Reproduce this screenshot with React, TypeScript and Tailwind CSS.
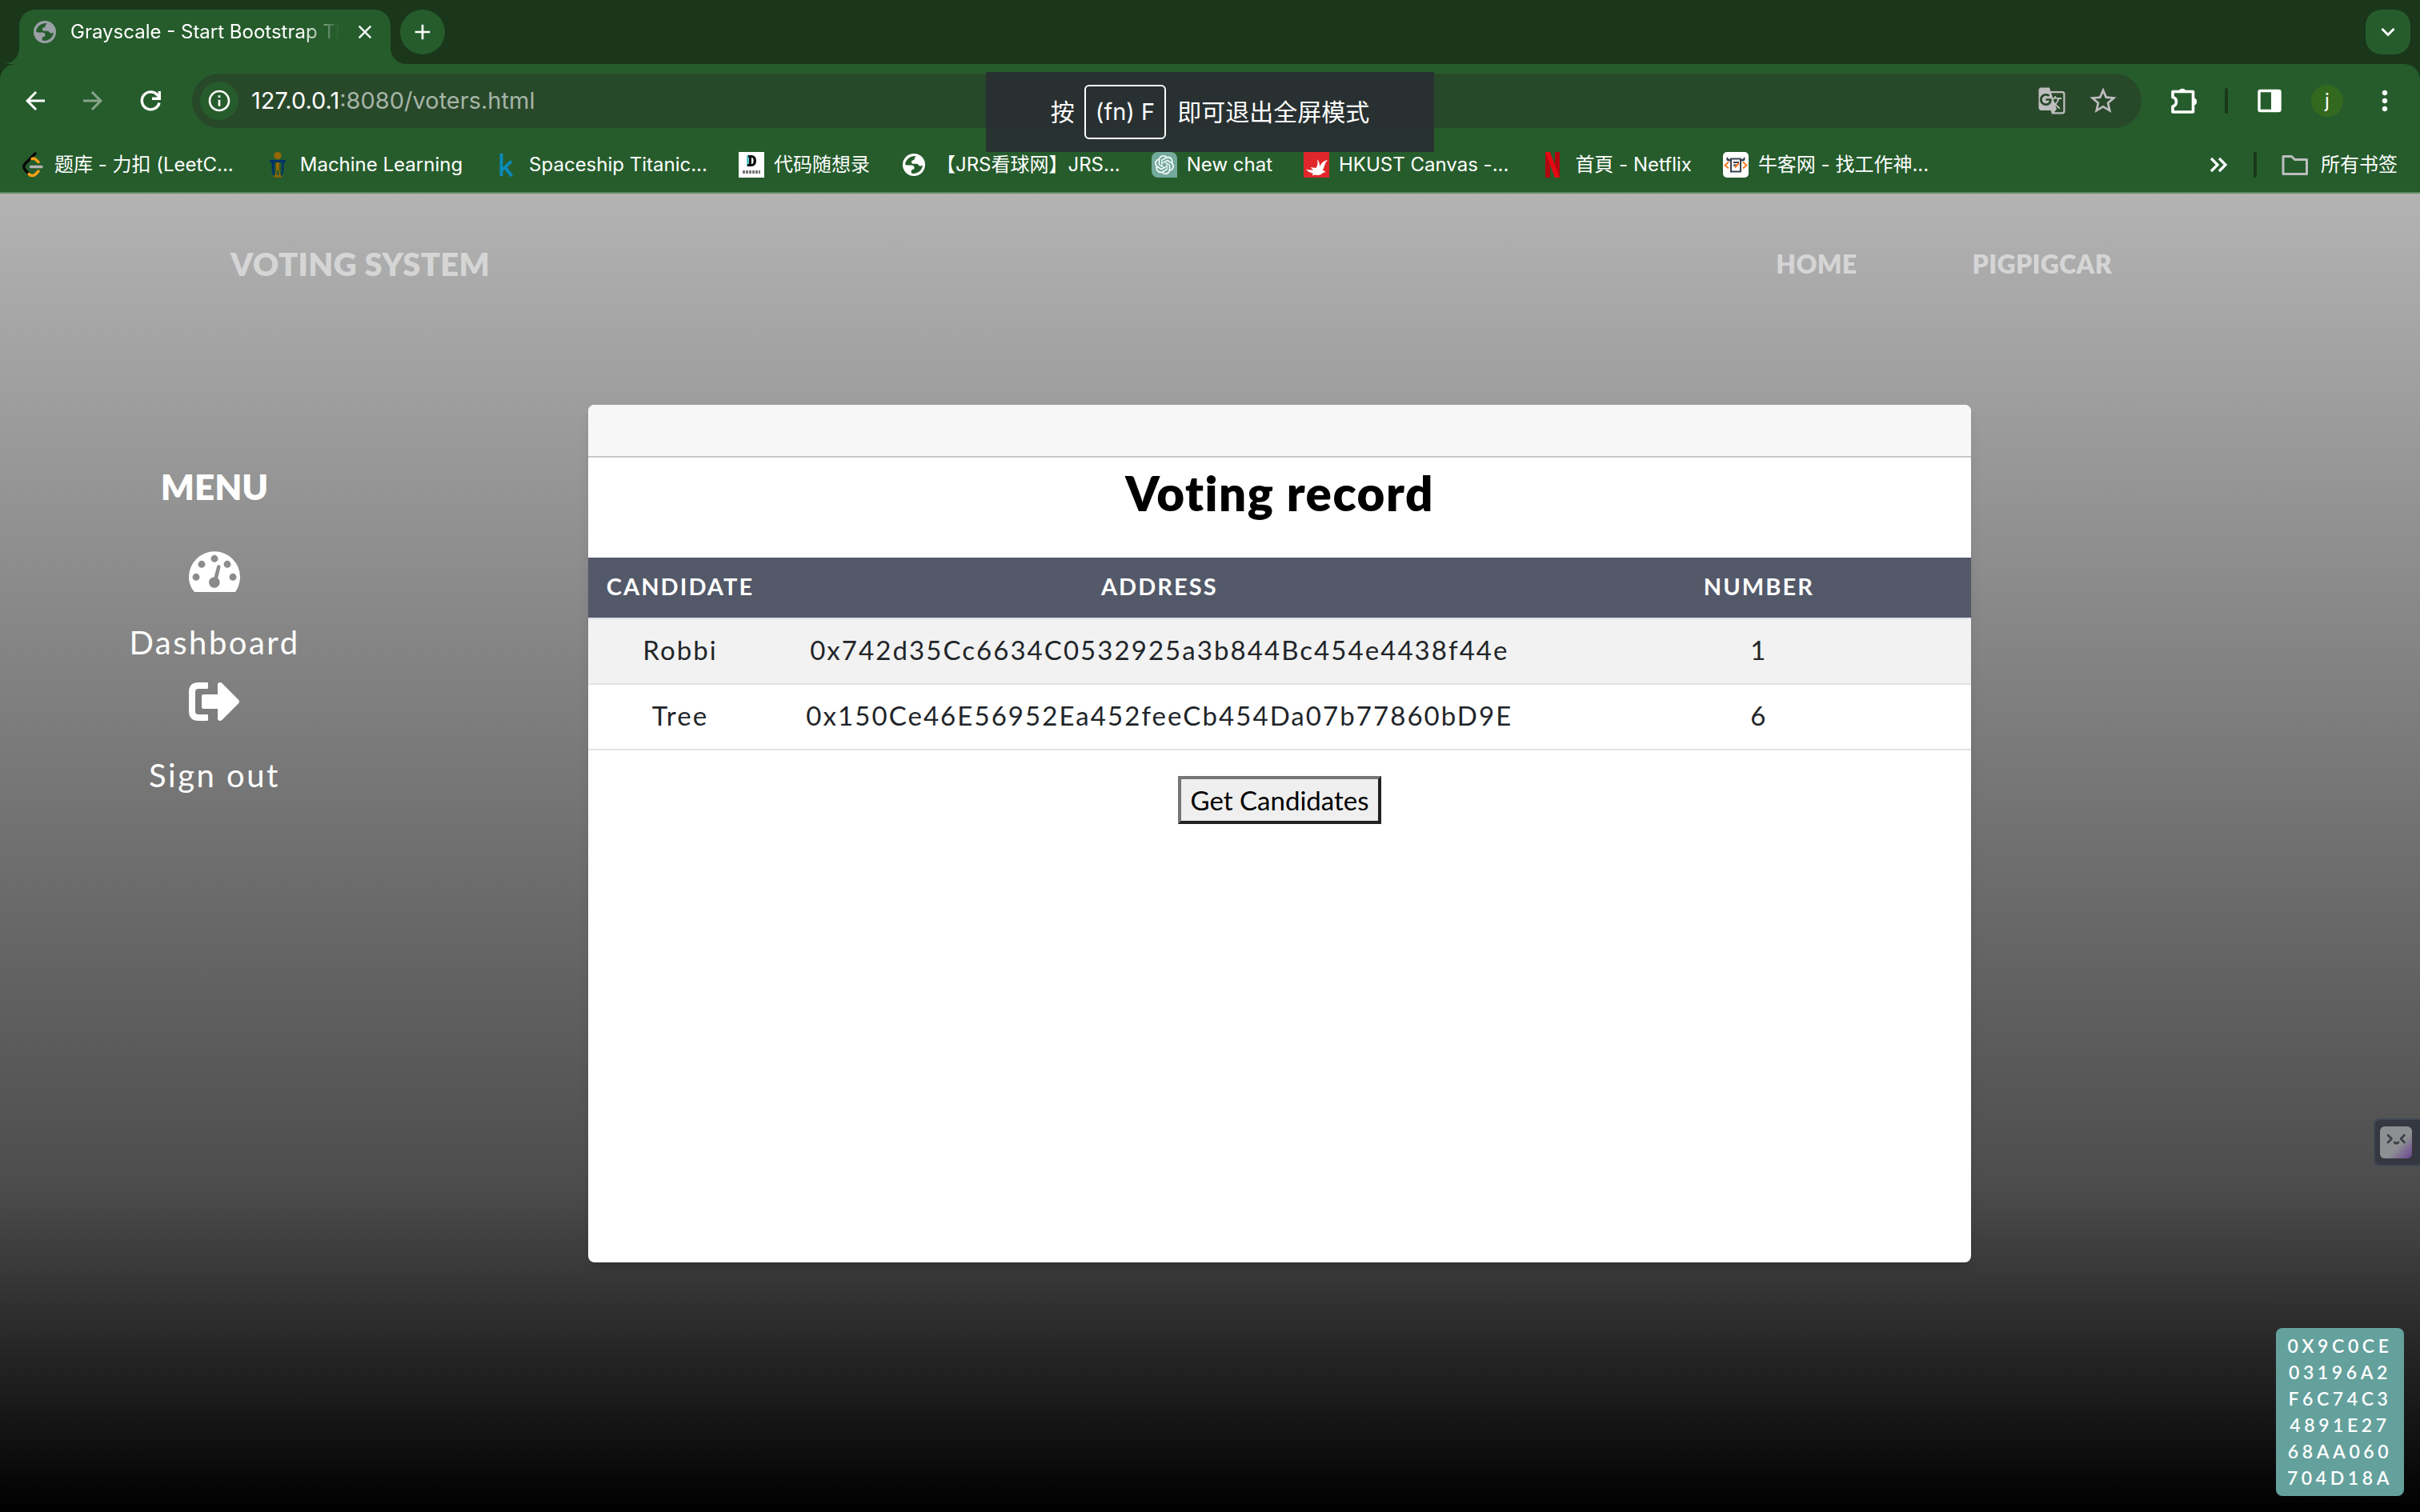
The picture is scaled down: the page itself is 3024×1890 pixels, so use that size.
import React from "react";
import type { ReactNode } from "react";
import {
  MdAdd,
  MdArrowBack,
  MdArrowForward,
  MdClose,
  MdGTranslate,
  MdInfoOutline,
  MdMoreVert,
  MdStarBorder,
} from "react-icons/md";
import { SiOpenai } from "react-icons/si";

const UI_FONT = "font-['Inter','Noto_Sans_CJK_SC',sans-serif]";

function GlobeIcon({ className }: { className: string }) {
  return (
    <svg viewBox="0 0 28 28" className={className} aria-hidden="true">
      <circle cx="14" cy="14" r="14" fill="currentColor" />
      <path
        className="fill-[#265c2c]"
        d="M16.500 3C10 2.500 4.500 6.500 3.200 12.500 3 14 4 14.500 6 14.500h5c2.500 0 3.500 1.300 3.500 3.500 0 1.300-.8 2-2.200 2-1.200 0-1.500 .7-1.500 2v2.500c5 1.200 9.500-.5 12.200-4.500 1-1.500 1.800-3.500 2-5.500-1 1-2.500 1.300-4 .8-1.500-.6-1.500-2.300-3.200-2.500h-4.500c-1.500 0-2.300-.8-2.300-2.300 0-1.400 .8-2.200 2.200-2.200 1.200 0 1.300-.8 1.500-2 .2-1.300 1-1.800 1.800-3.300z"
      />
    </svg>
  );
}

function LeetCodeIcon() {
  return (
    <svg viewBox="0 0 32 32" className="size-8" fill="none" strokeLinecap="round" strokeWidth="3.400" aria-hidden="true">
      <path stroke="#070706" d="M20 2 7.500 14.500a5.500 5.500 0 0 0 0 8L12 27.500" />
      <path stroke="#ffa116" d="M16 8.500c1.500-.8 3.500-.5 4.800 1L24 12.500M12 27.500c2.500 2.800 6.200 2.600 8.500 .3L24 24" />
      <path stroke="#b3b3b3" d="M14.500 18.500H28" />
    </svg>
  );
}

function HkustIcon() {
  return (
    <svg viewBox="0 0 32 32" className="size-8" aria-hidden="true">
      <circle cx="16" cy="4.500" r="4.500" fill="#996600" />
      <path fill="#003366" d="M6 10h20v2.500l-2.500 1V20c0 5-1 8-4 11h-1c2-3 2.500-6 2.500-11v-7h-1v0h-8v7c0 5 .5 8 2.500 11h-2c-3-3-4-6-4-11v-6.500L6 12.500z" />
      <path fill="#996600" d="M14 13h4v8c0 4 1 7 3.500 10.500h-11C13 28 14 25 14 21z" />
      <path fill="#265c2c" d="M15.300 22h1.400l1.300 7h-4z" />
    </svg>
  );
}

function KaggleIcon() {
  return (
    <svg viewBox="0 0 32 32" className="size-8" fill="none" stroke="#0a8bbf" strokeWidth="3.800" aria-hidden="true">
      <path d="M9.500 2v28M22 11.500 10.500 22.500M13.500 18.500 22.500 30" />
    </svg>
  );
}

function CarlIcon() {
  return (
    <svg viewBox="0 0 32 32" className="size-8" aria-hidden="true">
      <path fill="#fff" d="M0 0h32v32H0z" />
      <path fill="#5bc5c9" d="M10 4h4v14h-4z" />
      <path fill="#111" fillRule="evenodd" d="M12 4h4c4 0 6 3 6 7s-2 7-6 7h-5v-3h2V7h-1zM16 7v8c2 0 2.500-2 2.500-4S18 7 16 7z" />
      <path stroke="#777" strokeWidth="4" strokeDasharray="3 1" d="M5 25h22" />
    </svg>
  );
}

function CanvasIcon() {
  return (
    <svg viewBox="0 0 32 32" className="size-8" aria-hidden="true">
      <path fill="#e0262b" d="M0 0h32v32H0z" />
      <path
        fill="#fff"
        d="M17 9c2.500 3 3.300 6 3 9.500 1.500-4 4.500-7.500 10-8.500-3 3-3.500 6-4.500 9-.5 1.500-1.200 2.500-2 3.500 2 .5 3 1.500 4 3.300-1.500-.5-2.800-.3-3.800 .7-2.200 2.500-6.200 3-9.700 2l-3 1 .7-2.700C8.500 26 5 24.500 3 21.500c3 1 6.500 1.300 9.500 .7-1.700-.6-3-1.700-3.700-3.200 2.700 .8 5.200 1 7.200 .5 1.500-3 2-6.500 1-10.500z"
      />
    </svg>
  );
}

function NetflixIcon() {
  return (
    <svg viewBox="0 0 32 32" className="size-8" aria-hidden="true">
      <path fill="#b1060f" d="M7 0h6v32H7zM19 0h6v32h-6z" />
      <path fill="#e50914" d="M7 0h6l12 32h-6z" />
    </svg>
  );
}

function NowcoderIcon() {
  return (
    <svg viewBox="0 0 32 32" className="size-8" fill="none" strokeWidth="2" aria-hidden="true">
      <rect width="32" height="32" rx="5" fill="#fff" />
      <path fill="#39424e" d="M5.500 6C3.500 8 4 11 7 11.500h2V9C7 9 5.800 8 5.500 6zM26.500 6c2 2 1.500 5-1.500 5.500h-2V9c2 0 3.200-1 3.500-3z" />
      <path stroke="#39424e" d="M10 8.500v16h12v-16zM13 13h7M13 16.500h4" />
      <path stroke="#ff7a1a" d="M7 12.500l-4.500 4 4.500 4M25 12.500l4.500 4-4.500 4M20 14l-5 5.500" />
    </svg>
  );
}

const bookmarks: { label: string; icon: ReactNode }[] = [
  { label: "题库 - 力扣 (LeetC...", icon: <LeetCodeIcon /> },
  { label: "Machine Learning", icon: <HkustIcon /> },
  { label: "Spaceship Titanic...", icon: <KaggleIcon /> },
  { label: "代码随想录", icon: <CarlIcon /> },
  { label: "【JRS看球网】JRS...", icon: <GlobeIcon className="mx-0.5 size-7 text-white" /> },
  {
    label: "New chat",
    icon: (
      <span className="flex size-8 items-center justify-center rounded-lg rounded-br-none bg-[#74aa9c]">
        <SiOpenai className="size-6" />
      </span>
    ),
  },
  { label: "HKUST Canvas -...", icon: <CanvasIcon /> },
  { label: "首頁 - Netflix", icon: <NetflixIcon /> },
  { label: "牛客网 - 找工作神...", icon: <NowcoderIcon /> },
];

function TabStrip() {
  return (
    <div className="flex h-20 items-end bg-[#1a371b] pr-3 pl-1">
      <svg viewBox="0 0 20 20" className="size-5 text-[#265c2c]" aria-hidden="true">
        <path fill="currentColor" d="M20 0v20H0A20 20 0 0 0 20 0z" />
      </svg>
      <div className="flex h-[68px] w-[464px] items-center rounded-t-[20px] bg-[#265c2c] pr-4 pb-3 pl-[18px]">
        <GlobeIcon className="size-7 shrink-0 text-[#9aa0a6]" />
        <span className="ml-[18px] w-[336px] overflow-hidden text-2xl whitespace-nowrap [mask-image:linear-gradient(to_right,black_86%,transparent)]">
          Grayscale - Start Bootstrap Theme
        </span>
        <button aria-label="Close tab" className="ml-auto flex size-8 items-center justify-center">
          <MdClose className="size-7" />
        </button>
      </div>
      <svg viewBox="0 0 20 20" className="size-5 text-[#265c2c]" aria-hidden="true">
        <path fill="currentColor" d="M0 0v20h20A20 20 0 0 1 0 0z" />
      </svg>
      <button aria-label="New tab" className="mb-3 -ml-2 flex size-14 items-center justify-center rounded-full bg-[#265c2c]">
        <MdAdd className="size-8" />
      </button>
      <button aria-label="Search tabs" className="mb-3 ml-auto flex size-14 items-center justify-center rounded-[20px] bg-[#265c2c]">
        <svg viewBox="0 0 20 20" className="size-5" fill="none" stroke="currentColor" strokeWidth="3" aria-hidden="true">
          <path d="m2.500 6 7.500 7.500L17.500 6" />
        </svg>
      </button>
    </div>
  );
}

function Toolbar() {
  return (
    <div className="flex h-[92px] items-center rounded-t-[20px] bg-[#265c2c] pr-6 pl-[26px]">
      <button aria-label="Back">
        <MdArrowBack className="size-9" />
      </button>
      <button aria-label="Forward" className="ml-9 text-white/45">
        <MdArrowForward className="size-9" />
      </button>
      <button aria-label="Reload" className="ml-9">
        <svg viewBox="0 0 36 36" className="size-9" fill="none" stroke="currentColor" strokeWidth="3.400" aria-hidden="true">
          <path d="M29 20.500A11 11 0 1 1 26.500 10.500L29 13.500" />
          <path d="M29.300 6v9.300H20" />
        </svg>
      </button>
      <div className="ml-[34px] flex h-[68px] flex-1 items-center rounded-full bg-[#28482a] pr-7 pl-2.5">
        <button aria-label="Site information" className="flex size-12 items-center justify-center rounded-full bg-[#265c2c]">
          <MdInfoOutline className="size-8" />
        </button>
        <p className="ml-4 flex-1 text-[29px] whitespace-nowrap">
          127.0.0.1<span className="text-[#a6b5a7]">:8080/voters.html</span>
        </p>
        <button aria-label="Translate this page" className="text-[#bdbdbd]">
          <MdGTranslate className="size-9" />
        </button>
        <button aria-label="Bookmark this page" className="ml-[26px] text-[#bdbdbd]">
          <MdStarBorder className="size-10" />
        </button>
      </div>
      <button aria-label="Extensions" className="ml-9">
        <svg viewBox="0 0 36 36" className="size-9" aria-hidden="true">
          <path
            fill="none"
            stroke="currentColor"
            strokeWidth="3.600"
            strokeLinejoin="round"
            d="M3 6.500h25.500v25.500H3v-7c6-1.500 6-10 0-11.500z"
          />
          <path fill="currentColor" d="M10.500 6a4.800 4.800 0 0 1 9 0zM29.500 14.500a4.600 4.600 0 0 1 0 9z" />
        </svg>
      </button>
      <span className="ml-8 h-8 w-1 rounded-sm bg-[#1a371b]" />
      <button aria-label="Side panel" className="ml-9">
        <svg viewBox="0 0 32 32" className="size-8" aria-hidden="true">
          <rect x="3" y="3.500" width="26" height="25" rx="1.500" fill="none" stroke="currentColor" strokeWidth="3.400" />
          <path fill="currentColor" d="M18 4h11v24H18z" />
        </svg>
      </button>
      <button aria-label="Profile" className="ml-9 flex size-10 items-center justify-center rounded-full bg-[#33691e] text-2xl">
        j
      </button>
      <button aria-label="Menu" className="ml-8">
        <MdMoreVert className="size-10" />
      </button>
    </div>
  );
}

function BookmarksBar() {
  return (
    <nav aria-label="Bookmarks" className="flex h-[70px] items-center border-b-2 border-[#5c8a60] bg-[#265c2c] pr-7 pl-6 text-2xl">
      <div className="flex h-full flex-1 items-center gap-[39px]">
        {bookmarks.map(({ label, icon }) => (
          <a key={label} href="#" className="flex items-center gap-3 whitespace-nowrap">
            {icon}
            {label}
          </a>
        ))}
      </div>
      <button aria-label="More bookmarks">
        <svg viewBox="0 0 24 24" className="size-6" fill="none" stroke="currentColor" strokeWidth="3.200" aria-hidden="true">
          <path d="m3 4 8 8-8 8M13 4l8 8-8 8" />
        </svg>
      </button>
      <span className="ml-8 h-8 w-1 rounded-sm bg-[#1a371b]" />
      <a href="#" className="ml-[30px] flex items-center gap-3.5">
        <svg viewBox="0 0 36 32" className="h-8 w-9 text-[#bdbdbd]" fill="none" stroke="currentColor" strokeWidth="3" strokeLinejoin="round" aria-hidden="true">
          <path d="M3 5.500h10.500l4 4H32.500v18H3z" />
        </svg>
        所有书签
      </a>
    </nav>
  );
}

function FullscreenHint() {
  return (
    <div className="absolute top-[90px] left-1/2 flex h-[100px] w-[560px] -translate-x-1/2 items-center justify-center bg-[#282f32]/95 text-3xl">
      按
      <kbd className={`mr-3.5 ml-3 flex h-[68px] items-center rounded-md border-2 border-white px-3 text-[29px] ${UI_FONT}`}>
        (fn) F
      </kbd>
      即可退出全屏模式
    </div>
  );
}

function DashboardIcon() {
  return (
    <svg viewBox="0 0 192 153" className="h-[51px] w-16" aria-hidden="true">
      <path
        fill="currentColor"
        fillRule="evenodd"
        d="M22 153C8 140 0 118 0 97a96 96 0 0 1 192 0c0 21-8 43-18 56zM27 83.500a13.500 13.500 0 1 0 .1 27 13.500 13.500 0 0 0-.1-27zM48 35.500a13.500 13.500 0 1 0 .1 27 13.500 13.500 0 0 0-.1-27zM96 14.500a13.500 13.500 0 1 0 .1 27 13.500 13.500 0 0 0-.1-27zM144 35.500a13.500 13.500 0 1 0 .1 27 13.500 13.500 0 0 0-.1-27zM165 83.500a13.500 13.500 0 1 0 .1 27 13.500 13.500 0 0 0-.1-27zM105.500 56 95 96.500a20.500 20.500 0 1 0 13.500 4.500l10-41.500a6.800 6.800 0 0 0-13-3.500z"
      />
    </svg>
  );
}

function SignOutIcon() {
  return (
    <svg viewBox="0 0 192 144" className="h-12 w-16" fill="currentColor" aria-hidden="true">
      <path d="M68 0q4 0 4 4v16q0 4-4 4H36q-12 0-12 12v72q0 12 12 12h32q4 0 4 4v16q0 4-4 4H36Q0 144 0 108V36Q0 0 36 0z" />
      <path d="M108 8q0-8 9-8 4 0 8 4l62 62q4 6 0 12l-62 62q-4 4-8 4-9 0-9-8V99H56q-8 0-8-8V53q0-8 8-8h52z" />
    </svg>
  );
}

function SideMenu() {
  return (
    <aside className="w-[536px] pt-[74px] text-center text-white">
      <h2 className="text-[44px] leading-[56px] font-extrabold">MENU</h2>
      <a href="#" className="mt-[53px] flex flex-col items-center text-[40px] leading-[60px] tracking-[0.0625em]">
        <DashboardIcon />
        <span className="mt-[33px]">Dashboard</span>
      </a>
      <a href="#" className="mt-5 flex flex-col items-center text-[40px] leading-[60px] tracking-[0.0625em]">
        <SignOutIcon />
        <span className="mt-[38px]">Sign out</span>
      </a>
    </aside>
  );
}

const records = [
  { name: "Robbi", address: "0x742d35Cc6634C0532925a3b844Bc454e4438f44e", number: 1 },
  { name: "Tree", address: "0x150Ce46E56952Ea452feeCb454Da07b77860bD9E", number: 6 },
];

function VotingCard() {
  return (
    <section className="mr-[561px] ml-[199px] min-h-[1072px] flex-1 overflow-hidden rounded-lg bg-white text-center text-[#212529] shadow-lg">
      <div className="h-[66px] border-b-2 border-[#c8c8c8] bg-[#f7f7f7]" />
      <h1 className="pt-2 text-[60px] leading-[72px] font-extrabold tracking-wide text-black">Voting record</h1>
      <table className="mt-[45px] w-full table-fixed border-collapse text-[33px] leading-[48px] tracking-[0.0625em]">
        <colgroup>
          <col className="w-[230px]" />
          <col className="w-[56%]" />
          <col />
        </colgroup>
        <thead className="bg-[#535969] text-[29px] text-white">
          <tr className="h-[76px]">
            <th scope="col" className="px-0 pb-1">CANDIDATE</th>
            <th scope="col" className="px-0 pb-1">ADDRESS</th>
            <th scope="col" className="px-0 pb-1">NUMBER</th>
          </tr>
        </thead>
        <tbody>
          {records.map((record) => (
            <tr key={record.name} className="h-[82px] border-y-2 border-[#dee2e6] odd:bg-[#f2f2f2]">
              <td className="px-0 pb-1">{record.name}</td>
              <td className="px-0 pb-1">{record.address}</td>
              <td className="px-0 pb-1">{record.number}</td>
            </tr>
          ))}
        </tbody>
      </table>
      <button className="mt-8 h-[60px] border-4 border-t-[#767676] border-r-[#212121] border-b-[#212121] border-l-[#767676] bg-[#efefef] px-3 text-[33px] leading-[48px] text-black">
        Get Candidates
      </button>
    </section>
  );
}

export default function App() {
  return (
    <div className="relative flex min-h-screen flex-col">
      <header className={`bg-[#1a371b] text-white ${UI_FONT}`}>
        <TabStrip />
        <Toolbar />
        <BookmarksBar />
        <FullscreenHint />
      </header>
      <div className="relative flex-1 bg-[linear-gradient(to_bottom,#b3b3b3_0%,#4d4d4d_75%,#000_100%)] font-['Lato','Noto_Sans',sans-serif]">
        <nav aria-label="Main" className="flex items-center pt-[58px] pr-[385px] pl-[288px] text-[32px] leading-[60px] font-extrabold tracking-[0.01em] text-white/50">
          <a href="#" className="mr-auto text-[40px]">
            VOTING SYSTEM
          </a>
          <a href="#">HOME</a>
          <a href="#" className="ml-36">
            PIGPIGCAR
          </a>
        </nav>
        <main className="flex items-start pt-[146px]">
          <SideMenu />
          <VotingCard />
        </main>
        <button
          aria-label="Open assistant"
          className="absolute right-0 bottom-[432px] flex h-[60px] items-center rounded-l-lg border-2 border-r-0 border-[#414853] bg-[#353840] pr-2.5 pl-1.5"
        >
          <svg viewBox="0 0 40 40" className="size-10 rounded-md bg-[linear-gradient(135deg,#8d8f92_60%,#6b4194)]" fill="none" stroke="#3b3e45" strokeWidth="2.600" strokeLinecap="round" strokeLinejoin="round" aria-hidden="true">
            <path d="m10 11 4.500 4.500L10 20M30.500 11 26 15.500l4.500 4.500M18 20q2.500 2.500 5 0" />
          </svg>
        </button>
        <button className="absolute right-5 bottom-5 flex w-40 flex-col rounded-lg bg-[#64a19d] py-1.5 text-center text-[23px] leading-[33px] font-semibold tracking-[0.2em] text-white">
          <span>0X9C0CE</span>
          <span>03196A2</span>
          <span>F6C74C3</span>
          <span>4891E27</span>
          <span>68AA060</span>
          <span>704D18A</span>
        </button>
      </div>
    </div>
  );
}
